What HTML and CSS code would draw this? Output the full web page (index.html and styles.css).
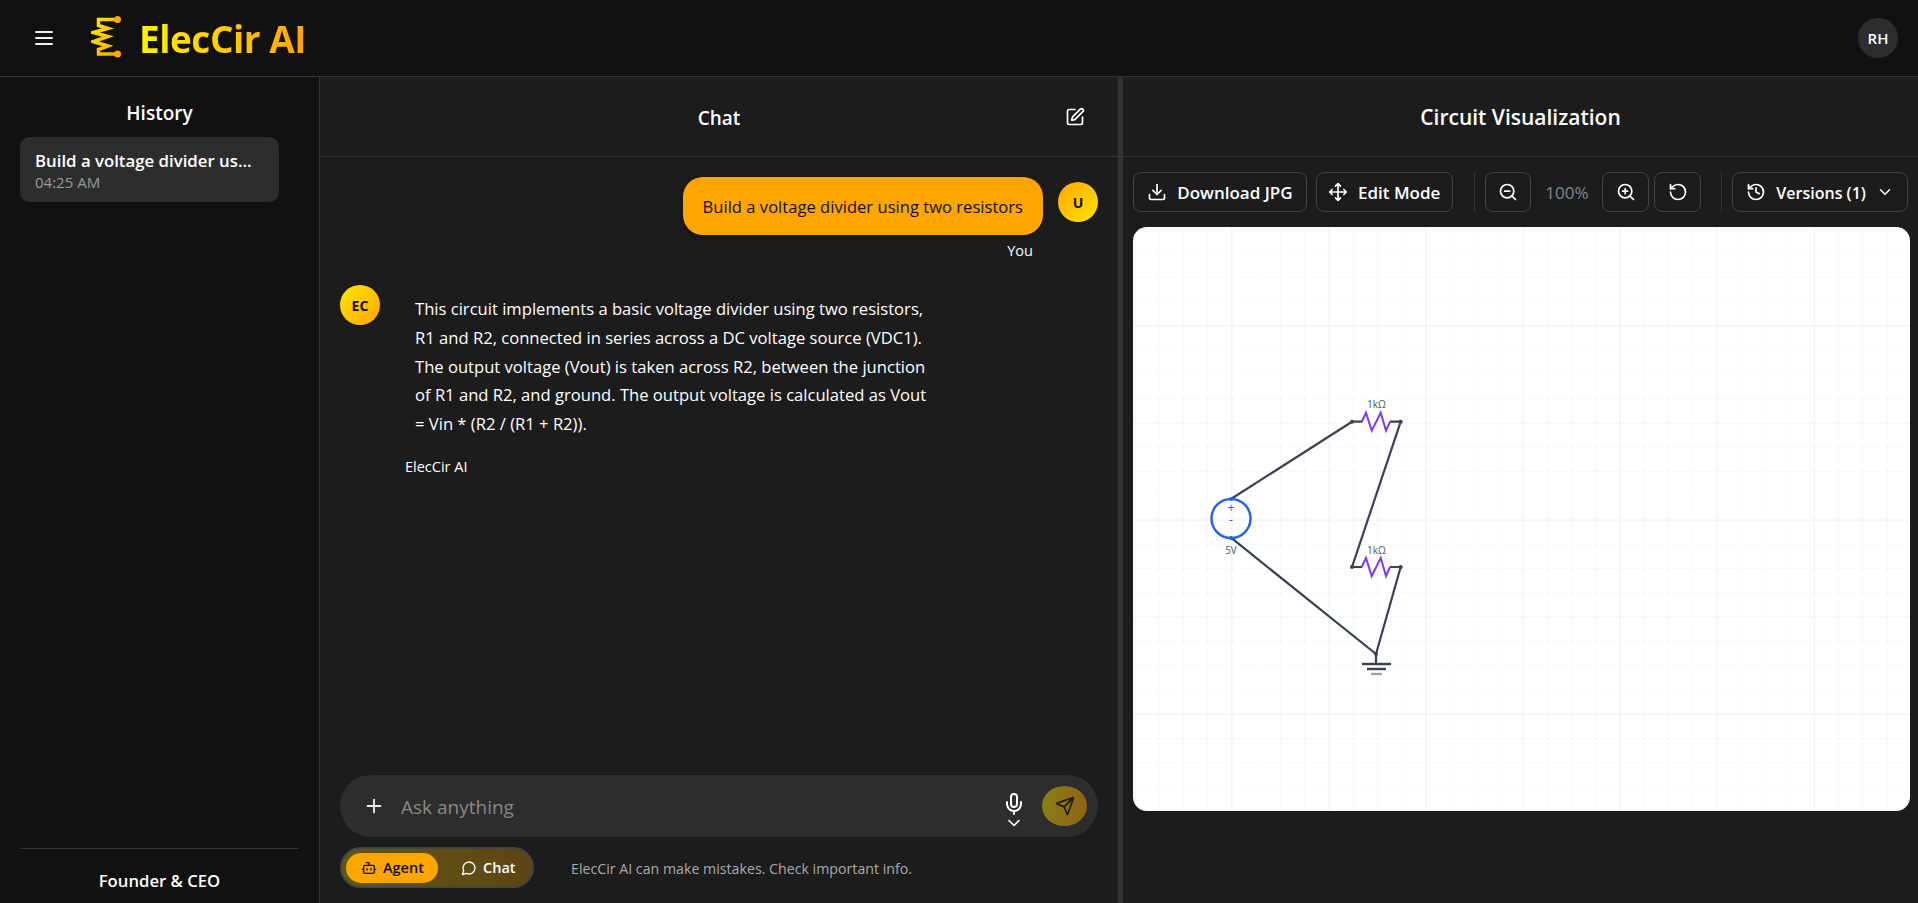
FILE: index.html
```html
<!DOCTYPE html>
<html lang="en">
<head>
  <meta charset="UTF-8" />
  <meta name="viewport" content="width=device-width, initial-scale=1.0">
  <title>ElecCir AI</title>
  <link rel="stylesheet" href="styles.css">
</head>
<body>
  <header class="topbar">
    <svg class="menu-icon" viewBox="0 0 24 24"><path d="M4 6h16M4 12h16M4 18h16"/></svg>
    <svg class="logo" viewBox="0 0 32 44">
      <defs>
        <linearGradient id="logoGrad" x1="0" y1="0" x2="1" y2="1">
          <stop offset="0" stop-color="#ffe600"/><stop offset="1" stop-color="#ffa500"/>
        </linearGradient>
      </defs>
      <path d="M26.500 3.500H7.500V9.500L17 12.500 2.300 16.500 17 20.500 2.300 25.500 17 30 7.500 33.500V38H26.500" fill="none" stroke="url(#logoGrad)" stroke-width="3.500"/>
      <circle cx="26.500" cy="3.500" r="3.500" fill="#ffa500"/>
      <circle cx="26.500" cy="38" r="3.500" fill="#ffa500"/>
    </svg>
    <span class="brand">ElecCir AI</span>
    <div class="user-chip">RH</div>
  </header>

  <main class="layout">
    <aside class="sidebar">
      <h2>History</h2>
      <div class="history-item">
        <div class="history-title">Build a voltage divider us...</div>
        <div class="history-time">04:25 AM</div>
      </div>
      <div class="sidebar-foot">Founder &amp; CEO</div>
    </aside>

    <section class="chat">
      <div class="panel-head chat-head">
        <h2>Chat</h2>
        <svg class="icon edit-icon" viewBox="0 0 24 24"><path d="M12 3H5a2 2 0 0 0-2 2v14a2 2 0 0 0 2 2h14a2 2 0 0 0 2-2v-7"/><path d="M18.375 2.625a1 1 0 0 1 3 3l-9.013 9.014a2 2 0 0 1-.853.505l-2.873.84a.5.5 0 0 1-.62-.62l.84-2.873a2 2 0 0 1 .506-.852z"/></svg>
      </div>

      <div class="messages">
        <div class="msg-user">
          <div class="msg-user-col">
            <div class="bubble">Build a voltage divider using two resistors</div>
            <div class="msg-name you">You</div>
          </div>
          <div class="avatar avatar-u">U</div>
        </div>
        <div class="msg-ai">
          <div class="avatar avatar-ec">EC</div>
          <div class="msg-ai-col">
            <p class="ai-text">This circuit implements a basic voltage divider using two resistors, R1 and R2, connected in series across a DC voltage source (VDC1). The output voltage (Vout) is taken across R2, between the junction of R1 and R2, and ground. The output voltage is calculated as Vout = Vin * (R2 / (R1 + R2)).</p>
            <div class="msg-name">ElecCir AI</div>
          </div>
        </div>
      </div>

      <div class="composer">
        <div class="input-pill">
          <svg class="icon plus-icon" viewBox="0 0 24 24"><path d="M5 12h14M12 5v14"/></svg>
          <span class="placeholder">Ask anything</span>
          <div class="mic">
            <svg class="icon mic-icon" viewBox="0 0 24 24"><path d="M12 2a3 3 0 0 0-3 3v7a3 3 0 0 0 6 0V5a3 3 0 0 0-3-3Z"/><path d="M19 10v2a7 7 0 0 1-14 0v-2"/><path d="M12 19v3"/></svg>
            <svg class="icon mic-chev" viewBox="0 0 24 24"><path d="m6 9 6 6 6-6"/></svg>
          </div>
          <div class="send">
            <svg class="icon send-icon" viewBox="0 0 24 24"><path d="M14.536 21.686a.5.5 0 0 0 .937-.024l6.5-19a.496.496 0 0 0-.635-.635l-19 6.500a.5.5 0 0 0-.024.937l7.930 3.180a2 2 0 0 1 1.112 1.110z"/><path d="m21.854 2.147-10.940 10.939"/></svg>
          </div>
        </div>
        <div class="composer-foot">
          <div class="mode-toggle">
            <div class="mode mode-on">
              <svg class="icon mode-icon" viewBox="0 0 24 24"><path d="M12 8V4H8"/><rect x="4" y="8" width="16" height="12" rx="2"/><path d="M2 14h2M20 14h2M15 13v2M9 13v2"/></svg>
              Agent
            </div>
            <div class="mode mode-off">
              <svg class="icon mode-icon" viewBox="0 0 24 24"><path d="M7.900 20A9 9 0 1 0 4 16.100L2 22Z"/></svg>
              Chat
            </div>
          </div>
          <span class="disclaimer">ElecCir AI can make mistakes. Check important info.</span>
        </div>
      </div>
    </section>

    <div class="split"></div>

    <section class="viz">
      <div class="panel-head viz-head"><h2>Circuit Visualization</h2></div>
      <div class="toolbar">
        <button class="tool tool-download">
          <svg class="icon" viewBox="0 0 24 24"><path d="M21 15v4a2 2 0 0 1-2 2H5a2 2 0 0 1-2-2v-4"/><path d="m7 10 5 5 5-5"/><path d="M12 15V3"/></svg>
          Download JPG
        </button>
        <button class="tool tool-edit">
          <svg class="icon" viewBox="0 0 24 24"><path d="m5 9-3 3 3 3M9 5l3-3 3 3M15 19l-3 3-3-3M19 9l3 3-3 3M2 12h20M12 2v20"/></svg>
          Edit Mode
        </button>
        <span class="tool-sep"></span>
        <button class="tool tool-square">
          <svg class="icon" viewBox="0 0 24 24"><circle cx="11" cy="11" r="8"/><path d="m21 21-4.350-4.350M8 11h6"/></svg>
        </button>
        <span class="zoom-level">100%</span>
        <button class="tool tool-square">
          <svg class="icon" viewBox="0 0 24 24"><circle cx="11" cy="11" r="8"/><path d="m21 21-4.350-4.350M11 8v6M8 11h6"/></svg>
        </button>
        <button class="tool tool-square">
          <svg class="icon" viewBox="0 0 24 24"><path d="M3 12a9 9 0 1 0 9-9 9.750 9.750 0 0 0-6.740 2.740L3 8"/><path d="M3 3v5h5"/></svg>
        </button>
        <span class="tool-sep sep-second"></span>
        <button class="tool tool-versions">
          <svg class="icon" viewBox="0 0 24 24"><path d="M3 12a9 9 0 1 0 9-9 9.750 9.750 0 0 0-6.740 2.740L3 8"/><path d="M3 3v5h5"/><path d="M12 7v5l4 2"/></svg>
          <span class="versions-label">Versions (1)</span>
          <svg class="icon chev" viewBox="0 0 24 24"><path d="m6 9 6 6 6-6"/></svg>
        </button>
      </div>

      <div class="canvas">
        <svg class="circuit" viewBox="1133 227 777 584">
          <defs>
            <pattern id="gridMinor" x="1134.300" y="228.300" width="24.270" height="24.270" patternUnits="userSpaceOnUse">
              <path d="M0 0H24.270M0 0V24.270" fill="none" stroke="#f3f4f6" stroke-width="1"/>
            </pattern>
            <pattern id="gridMajor" x="1134.300" y="228.300" width="97.080" height="97.080" patternUnits="userSpaceOnUse">
              <path d="M0 0H97.080M0 0V97.080" fill="none" stroke="#ebedf0" stroke-width="1.200"/>
            </pattern>
          </defs>
          <rect x="1133" y="227" width="777" height="584" fill="url(#gridMinor)"/>
          <rect x="1133" y="227" width="777" height="584" fill="url(#gridMajor)"/>

          <g class="wires">
            <path d="M1231 499 1352 421.700"/>
            <path d="M1400.700 421.700 1352 567"/>
            <path d="M1400.700 567 1376 654"/>
            <path d="M1231 537.700 1376 654"/>
            <path d="M1352 421.700h10M1390 421.700h10.700M1352 567h10M1390 567h10.700"/>
            <path d="M1376 654v10"/>
            <path class="gnd" d="M1362 664h29"/>
            <path class="gnd" d="M1367 669h19"/>
            <path class="gnd gnd-light" d="M1371 674h11"/>
          </g>
          <g class="nodes">
            <circle cx="1352" cy="421.700" r="2"/><circle cx="1400.700" cy="421.700" r="2"/>
            <circle cx="1352" cy="567" r="2"/><circle cx="1400.700" cy="567" r="2"/>
            <circle cx="1376" cy="654" r="2"/>
          </g>
          <path class="zig" d="M1361.700 421.700l4.300-9 5.700 18 9-18 5.300 18 4-9"/>
          <path class="zig" d="M1361.700 567l4.300-9 5.700 18 9-18 5.300 18 4-9"/>

          <circle class="source" cx="1231" cy="518.500" r="19.500"/>
          <circle class="source-pin" cx="1231" cy="499" r="2"/>
          <circle class="source-pin" cx="1231" cy="538" r="2"/>

          <text class="sign" x="1231" y="511.500">+</text>
          <text class="sign" x="1231" y="524">-</text>
          <text class="label" x="1231" y="554">5V</text>
          <text class="label" x="1376.500" y="408">1kΩ</text>
          <text class="label" x="1376.500" y="554">1kΩ</text>
        </svg>
      </div>
    </section>
  </main>
</body>
</html>
```

FILE: styles.css
```css
* {
  box-sizing: border-box;
}
html, body {
  height: 100%;
}
body {
  margin: 0;
  display: flex;
  flex-direction: column;
  overflow: hidden;
  background: #1c1c1c;
  color: #fff;
  font-family: "Open Sans", "Noto Sans", sans-serif;
}
h2 {
  margin: 0;
  font-weight: 600;
}
.icon {
  width: 20px;
  height: 20px;
  fill: none;
  stroke: currentColor;
  stroke-width: 2;
  stroke-linecap: round;
  stroke-linejoin: round;
  flex-shrink: 0;
}

/* top bar */
.topbar {
  height: 77px;
  flex-shrink: 0;
  display: flex;
  align-items: center;
  padding: 0 20px 0 32px;
  background: #111;
  border-bottom: 1px solid #333;
}
.menu-icon {
  width: 24px;
  height: 24px;
  fill: none;
  stroke: #eee;
  stroke-width: 2;
  stroke-linecap: round;
}
.logo {
  width: 32px;
  height: 44px;
  margin-left: 35px;
}
.brand {
  margin-left: 16px;
  font-size: 37px;
  font-weight: 700;
  letter-spacing: -0.5px;
  background: linear-gradient(90deg, #fff200, #ffa500);
  -webkit-background-clip: text;
  background-clip: text;
  color: transparent;
}
.user-chip {
  margin-left: auto;
  width: 40px;
  height: 40px;
  border-radius: 50%;
  background: #2d2d2d;
  display: flex;
  align-items: center;
  justify-content: center;
  font-size: 15px;
  font-weight: 600;
}

.layout {
  flex: 1;
  display: flex;
  min-height: 0;
}

/* history */
.sidebar {
  width: 320px;
  flex-shrink: 0;
  display: flex;
  flex-direction: column;
  padding: 0 20px;
  background: #111;
  border-right: 1px solid #333;
}
.sidebar h2 {
  font-size: 19px;
  line-height: 26px;
  text-align: center;
  margin: 23px 0 11px;
}
.history-item {
  width: 259px;
  height: 65px;
  padding: 13px 15px;
  background: #2d2d2d;
  border-radius: 10px;
}
.history-title {
  font-size: 16.800px;
  font-weight: 600;
  line-height: 22px;
  white-space: nowrap;
}
.history-time {
  font-size: 15px;
  line-height: 20px;
  color: #999;
}
.sidebar-foot {
  margin-top: auto;
  height: 55px;
  padding-top: 20px;
  border-top: 1px solid #333;
  font-size: 16.700px;
  font-weight: 600;
  line-height: 24px;
  text-align: center;
}

/* chat */
.chat {
  width: 798px;
  flex-shrink: 0;
  display: flex;
  flex-direction: column;
}
.panel-head {
  height: 80px;
  flex-shrink: 0;
  display: flex;
  align-items: center;
  justify-content: center;
  border-bottom: 1px solid #333;
}
.panel-head h2 {
  font-size: 19px;
  padding-top: 3px;
}
.viz-head h2 {
  font-size: 21px;
  padding-top: 1px;
}
.chat-head {
  position: relative;
}
.edit-icon {
  position: absolute;
  right: 33px;
  top: 30px;
}
.messages {
  flex: 1;
  padding: 20px 20px 0;
}
.msg-user {
  display: flex;
  justify-content: flex-end;
  gap: 15px;
}
.msg-user-col {
  display: flex;
  flex-direction: column;
  align-items: flex-end;
}
.bubble {
  height: 58px;
  padding: 0 20px;
  display: flex;
  align-items: center;
  background: #ffa500;
  color: #111;
  font-size: 16.600px;
  border-radius: 20px;
  box-shadow: 0 2px 6px rgba(0, 0, 0, 0.3);
}
.avatar {
  width: 40px;
  height: 40px;
  border-radius: 50%;
  flex-shrink: 0;
  display: flex;
  align-items: center;
  justify-content: center;
  color: #111;
  font-size: 14px;
  font-weight: 700;
}
.avatar-u {
  margin-top: 5px;
  background: linear-gradient(135deg, #ffa500, #ffe600);
}
.avatar-ec {
  background: linear-gradient(135deg, #ffe600, #ffa500);
}
.msg-name {
  font-size: 14.500px;
  line-height: 20px;
}
.you {
  margin: 6px 10px 0 0;
}
.msg-ai {
  display: flex;
  gap: 25px;
  margin-top: 24px;
}
.msg-ai-col {
  padding-top: 10px;
}
.ai-text {
  width: 522px;
  margin: 0 0 0 10px;
  font-size: 16.600px;
  line-height: 28.800px;
}
.msg-ai-col .msg-name {
  margin-top: 18px;
}

/* composer */
.composer {
  padding: 0 20px 15px;
}
.input-pill {
  height: 62px;
  display: flex;
  align-items: center;
  padding: 0 11px 0 23px;
  background: #2d2d2d;
  border-radius: 31px;
}
.plus-icon {
  width: 22px;
  height: 22px;
  color: #eee;
}
.placeholder {
  margin-left: 16px;
  padding-top: 2px;
  font-size: 19px;
  color: #888;
}
.mic {
  margin-left: auto;
  width: 22px;
  display: flex;
  flex-direction: column;
  align-items: center;
  padding-top: 12px;
}
.mic-icon {
  width: 24px;
  height: 24px;
}
.mic-chev {
  width: 20px;
  height: 20px;
  margin-top: -3px;
}
.send {
  margin-left: 17px;
  width: 45px;
  height: 40px;
  border-radius: 50%;
  display: flex;
  align-items: center;
  justify-content: center;
  background: linear-gradient(90deg, #8b7d16, #8f6415);
  color: #1c1c1c;
}
.composer-foot {
  display: flex;
  align-items: center;
  margin-top: 10px;
}
.mode-toggle {
  width: 194px;
  height: 41px;
  display: flex;
  align-items: center;
  padding: 0 4px;
  border: 2px solid #444;
  border-radius: 21px;
  background: linear-gradient(90deg, #5e5a12, #5f4415);
}
.mode {
  height: 30px;
  display: flex;
  align-items: center;
  gap: 6px;
  font-size: 14.500px;
  font-weight: 600;
  border-radius: 15px;
}
.mode-on {
  width: 92px;
  padding: 0 14px 0 15px;
  background: #ffa500;
  color: #111;
}
.mode-off {
  padding-left: 23px;
}
.mode-icon {
  width: 16px;
  height: 16px;
}
.disclaimer {
  margin-left: 37px;
  padding-top: 2px;
  font-size: 14.200px;
  color: #aaa;
}

.split {
  width: 5px;
  flex-shrink: 0;
  background: #333;
}

/* circuit panel */
.viz {
  flex: 1;
  min-width: 0;
  display: flex;
  flex-direction: column;
}
.toolbar {
  height: 70px;
  flex-shrink: 0;
  display: flex;
  align-items: center;
  padding: 0 10px;
}
.tool {
  height: 40px;
  display: flex;
  align-items: center;
  justify-content: center;
  gap: 10px;
  padding: 0;
  background: transparent;
  border: 1px solid #444;
  border-radius: 8px;
  color: #fff;
  font: 600 17px "Open Sans", "Noto Sans", sans-serif;
}
.tool-download {
  width: 174px;
}
.tool-edit {
  width: 137px;
  margin-left: 9px;
}
.tool-square {
  width: 47px;
}
.tool-square + .tool-square {
  margin-left: 5px;
}
.tool-sep {
  width: 1px;
  height: 40px;
  background: #333;
  margin: 0 10px 0 21px;
}
.sep-second {
  margin-left: 20px;
}
.zoom-level {
  width: 71px;
  text-align: center;
  color: #888;
  font-size: 17px;
}
.tool-versions {
  width: 176px;
  font-size: 16px;
}
.versions-label {
  padding-top: 2px;
}
.chev {
  width: 18px;
  height: 18px;
}
.canvas {
  width: 777px;
  height: 584px;
  margin-left: 10px;
  background: #fff;
  border-radius: 14px;
  overflow: hidden;
}
.circuit {
  display: block;
  width: 100%;
  height: 100%;
}
.wires path {
  fill: none;
  stroke: #374151;
  stroke-width: 2.200;
}
.wires .gnd {
  stroke-width: 2.400;
}
.wires .gnd-light {
  stroke: #9ca3af;
}
.nodes circle {
  fill: #374151;
}
.zig {
  fill: none;
  stroke: #7c3aed;
  stroke-width: 2;
}
.source {
  fill: none;
  stroke: #2563eb;
  stroke-width: 2.500;
}
.source-pin {
  fill: #2563eb;
}
.sign {
  font: 12px "Open Sans", sans-serif;
  fill: #2563eb;
  text-anchor: middle;
}
.label {
  font: 10px "Open Sans", sans-serif;
  fill: #4b5563;
  text-anchor: middle;
}
```
